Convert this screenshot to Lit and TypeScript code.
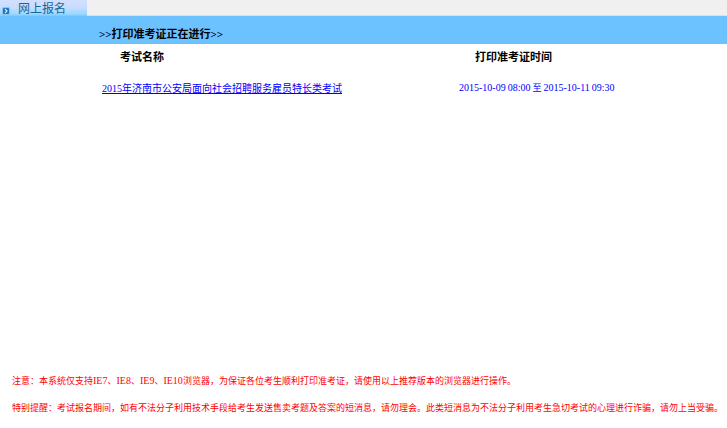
import { LitElement, html, css } from "lit";
import { customElement } from "lit/decorators.js";

@customElement("app-root")
export class AppRoot extends LitElement {
  static styles = css`
    :host {
      display: flex;
      flex-direction: column;
      width: 727px;
      height: 428px;
      overflow: hidden;
      background: #fff;
      font-family: "Liberation Serif", "Noto Sans CJK SC", serif;
      font-size: 10px;
    }
    .tabbar {
      display: flex;
      height: 16px;
      background: #f0f0f0;
      border-bottom: 1px solid #e0e0e0;
      box-sizing: border-box;
    }
    .tab {
      display: flex;
      align-items: center;
      gap: 8px;
      width: 87px;
      height: 16px;
      box-sizing: border-box;
      padding-left: 2px;
      background: linear-gradient(#d2e0ff 0, #c8dcff 50%, #aedcff 65%, #a2d8ff 85%, #7cc6ff 100%);
      color: #0f6a9c;
      font-family: "Noto Sans CJK SC", sans-serif;
      font-size: 12px;
      line-height: 16px;
    }
    .tab svg { flex: none; margin-top: 5px; }
    .band {
      display: flex;
      align-items: center;
      height: 28px;
      padding: 6px 0 0 99px;
      box-sizing: border-box;
      background: #6cc1ff;
      color: #000;
      font-size: 11px;
      font-weight: bold;
    }
    .grid {
      display: grid;
      grid-template-columns: 102px 240px 117px 1fr;
      grid-template-rows: 24px 38px;
    }
    .h1, .h2 { align-self: center; font-size: 11px; font-weight: bold; }
    .h1 { grid-column: 1 / 3; padding-left: 120px; }
    .h2 { grid-column: 3 / 5; padding-left: 133px; }
    .link {
      grid-column: 2;
      grid-row: 2;
      align-self: center;
      color: #0000ff;
      text-decoration: underline;
      white-space: nowrap;
    }
    .time {
      grid-column: 4;
      grid-row: 2;
      align-self: center;
      color: #0000ff;
      white-space: nowrap;
      word-spacing: -0.5px;
    }
    .to { font-size: 9px; }
    .notes {
      margin-top: auto;
      padding: 0 0 14px 12px;
      color: #ff0000;
      white-space: nowrap;
      display: flex;
      flex-direction: column;
      gap: 15px;
      font-size: 9px;
      line-height: 12px;
    }
    .lat { font-size: 10px; }
  `;

  render() {
    return html`
      <div class="tabbar">
        <div class="tab">
          <svg width="8" height="8" viewBox="0 0 8 8">
            <rect width="8" height="8" rx="1.5" fill="#8fc4ea" />
            <rect x="1" y="1" width="6" height="6" rx="1" fill="#1a78c2" />
            <path d="M3 2 L5 4 L3 6" fill="none" stroke="#d8f0ff" stroke-width="1.1" />
          </svg>
          <span>网上报名</span>
        </div>
      </div>
      <div class="band">&gt;&gt;打印准考证正在进行&gt;&gt;</div>
      <div class="grid">
        <div class="h1">考试名称</div>
        <div class="h2">打印准考证时间</div>
        <a class="link">2015年济南市公安局面向社会招聘服务雇员特长类考试</a>
        <div class="time">2015-10-09 08:00 <span class="to">至</span> 2015-10-11 09:30</div>
      </div>
      <div class="notes">
        <div>注意：本系统仅支持<span class="lat">IE7</span>、<span class="lat">IE8</span>、<span class="lat">IE9</span>、<span class="lat">IE10</span>浏览器，为保证各位考生顺利打印准考证，请使用以上推荐版本的浏览器进行操作。</div>
        <div>特别提醒：考试报名期间，如有不法分子利用技术手段给考生发送售卖考题及答案的短消息，请勿理会。此类短消息为不法分子利用考生急切考试的心理进行诈骗，请勿上当受骗。</div>
      </div>
    `;
  }
}
